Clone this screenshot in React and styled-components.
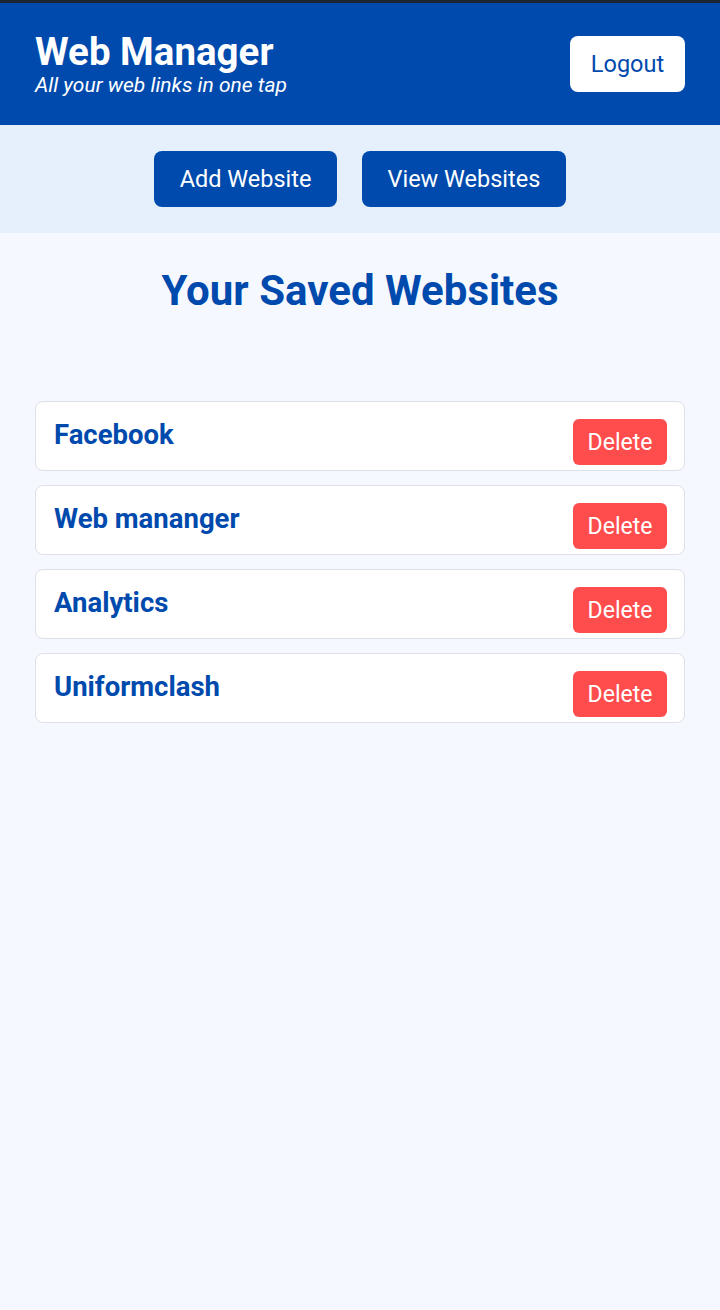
import React from "react";
import styled, { createGlobalStyle } from "styled-components";

const Global = createGlobalStyle`
  html, body { margin: 0; padding: 0; background: #f5f9ff; }
  body { font-family: Roboto, "Noto Sans", sans-serif; }
  * { box-sizing: border-box; }
`;

const Page = styled.div`
  min-height: 1310px;
  background: #f5f9ff;
  border-top: 3px solid #1c2530;
`;

const Header = styled.header`
  background: #004aad;
  height: 122px;
  padding: 0 35px;
  display: flex;
  align-items: center;
  justify-content: space-between;
`;

const Brand = styled.div`
  display: flex;
  flex-direction: column;
  margin-top: -1px;
`;

const Title = styled.h1`
  margin: 0;
  color: #fff;
  font-size: 38.5px;
  font-weight: 700;
  line-height: 42px;
`;

const Tagline = styled.p`
  margin: 0;
  color: #fff;
  font-size: 21px;
  font-style: italic;
  line-height: 24px;
`;

const LogoutButton = styled.button`
  background: #fff;
  color: #004aad;
  border: none;
  border-radius: 8px;
  width: 115px;
  height: 56px;
  font-family: inherit;
  font-size: 23.5px;
`;

const Nav = styled.nav`
  background: #e6f0fd;
  height: 108px;
  display: flex;
  justify-content: center;
  align-items: center;
  gap: 25px;
`;

const NavButton = styled.button`
  background: #004aad;
  color: #fff;
  border: none;
  border-radius: 8px;
  height: 56px;
  padding: 0 25.5px;
  font-family: inherit;
  font-size: 23.5px;
`;

const Main = styled.main`
  padding: 0 35px;
`;

const Heading = styled.h2`
  margin: 33px 0 0;
  text-align: center;
  color: #004aad;
  font-size: 42px;
  font-weight: 700;
  line-height: 50px;
`;

const List = styled.div`
  margin-top: 85px;
  display: flex;
  flex-direction: column;
  gap: 14px;
`;

const Card = styled.div`
  background: #fff;
  border: 1px solid #dde1e6;
  border-radius: 8px;
  height: 70px;
  padding: 17px 17px 0 18px;
  display: flex;
  justify-content: space-between;
  align-items: flex-start;
`;

const SiteName = styled.span`
  color: #004aad;
  font-size: 27.5px;
  font-weight: 700;
  line-height: 29px;
  margin-top: 1px;
`;

const DeleteButton = styled.button`
  background: #ff4d4d;
  color: #fff;
  border: none;
  border-radius: 6px;
  width: 94px;
  height: 46px;
  font-family: inherit;
  font-size: 23px;
`;

const sites = ["Facebook", "Web mananger", "Analytics", "Uniformclash"];

export default function App() {
  return (
    <Page>
      <Global />
      <Header>
        <Brand>
          <Title>Web Manager</Title>
          <Tagline>All your web links in one tap</Tagline>
        </Brand>
        <LogoutButton>Logout</LogoutButton>
      </Header>
      <Nav>
        <NavButton>Add Website</NavButton>
        <NavButton>View Websites</NavButton>
      </Nav>
      <Main>
        <Heading>Your Saved Websites</Heading>
        <List>
          {sites.map((s) => (
            <Card key={s}>
              <SiteName>{s}</SiteName>
              <DeleteButton>Delete</DeleteButton>
            </Card>
          ))}
        </List>
      </Main>
    </Page>
  );
}
